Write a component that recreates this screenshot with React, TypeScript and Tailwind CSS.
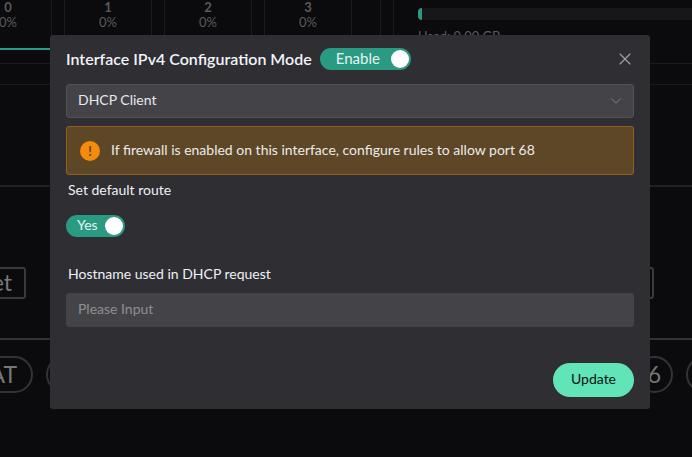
import { ChevronDown, X } from 'lucide-react';

const CoreTile = ({ id }: { id: number }) => (
  <div className="flex h-[50px] w-[88px] shrink-0 flex-col items-center border-x border-[#1c1c1e] pt-px text-[#5a5a5c]">
    <span className="text-[13px] font-bold leading-[12px]">{id}</span>
    <span className="mt-[2px] text-[13px] leading-[15px]">0%</span>
  </div>
);

const Toggle = ({ label, width, big }: { label: string; width: string; big?: boolean }) => (
  <div className={`flex items-center justify-between rounded-full bg-[#2b9a82] pr-[2px] ${width} ${big ? 'h-[22px] pl-[16px] text-[15px]' : 'h-[22px] pl-[11px] text-[14px]'} text-[#e2f6f1]`}>
    <span className="pb-[2px] leading-none">{label}</span>
    <span className="h-[18px] w-[18px] rounded-full bg-white" />
  </div>
);

export default function App() {
  return (
    <div className="relative h-[457px] w-[692px] overflow-hidden bg-[#0b0b0d] font-['Lato',sans-serif]">
      {/* page behind the dialog */}
      <div className="flex h-[64px] border-b border-[#1c1c1e]">
        <div className="flex w-[381px] shrink-0 gap-3 overflow-hidden border-r border-[#1c1c1e] pl-[65px]">
          <div className="relative -ml-[101px] flex self-start">
            <CoreTile id={0} />
            <div className="absolute bottom-0 left-0 h-[2px] w-full bg-[#2b9a82]" />
          </div>
          <CoreTile id={1} />
          <CoreTile id={2} />
          <CoreTile id={3} />
        </div>
        <div className="ml-3 flex-1 border-l border-[#1c1c1e] pl-[24px] pt-2">
          <div className="h-3 w-full rounded-l-full bg-[#171719]">
            <div className="h-3 w-1 rounded-l-full bg-[#2b9a82]" />
          </div>
          <div className="mt-2 text-[13px] leading-[16px] text-[#5a5a5c]">Used: 0.00 GB</div>
        </div>
      </div>
      <div className="mt-[20px] h-[101px] border-t border-[#1c1c1e]" />
      <div className="flex h-[153px] items-start justify-between border-t-2 border-[#222224] pt-[80px]">
        <div className="-ml-[30px] flex h-[32px] w-[56px] items-center justify-end rounded-[3px] border-2 border-[#3a3a3c] pb-[2px] pr-[12px] text-[23px] text-[#77777a]">et</div>
        <div className="mr-[38px] h-[32px] w-[20px] rounded-[3px] border-2 border-[#3a3a3c]" />
      </div>
      <div className="flex items-center justify-between border-t-2 border-[#333335] pt-[16px]">
        <div className="flex gap-[13px]">
          <div className="-ml-[30px] flex h-[37px] w-[63px] items-center justify-end rounded-full border-2 border-[#333335] pr-[14px] text-[23px] text-[#77777a]">AT</div>
          <div className="h-[37px] w-[37px] rounded-full border-2 border-[#333335]" />
        </div>
        <div className="flex gap-[13px]">
          <div className="flex h-[37px] w-[37px] items-center justify-center rounded-full border-2 border-[#333335] text-[23px] text-[#77777a]">6</div>
          <div className="-mr-[31px] h-[37px] w-[37px] rounded-full border-2 border-[#333335]" />
        </div>
      </div>

      {/* dialog */}
      <div className="absolute left-[50px] top-[35px] flex h-[374px] w-[600px] flex-col rounded-[3px] bg-[#2e2e33] px-4 pt-[13px]">
        <div className="flex h-[22px] items-center">
          <h2 className="text-[16px] font-semibold leading-none text-[#f0f4f9]">Interface IPv4 Configuration Mode</h2>
          <div className="ml-2">
            <Toggle label="Enable" width="w-[91px]" big />
          </div>
          <X className="-mr-px ml-auto text-[#a2a2a6]" size={20} strokeWidth={1.4} />
        </div>

        <div className="mt-[14px] flex h-[34px] items-center justify-between rounded-[3px] border border-[#505254] bg-[#444448] pb-[3px] pl-[11px] pr-[8px] text-[14px] text-[#e6e9ee]">
          <span>DHCP Client</span>
          <ChevronDown className="mt-[3px] text-[#808084]" size={18} strokeWidth={1.3} />
        </div>

        <div className="mt-2 flex h-[49px] items-center rounded-[3px] border border-[#97601a] bg-[#5e4726] pl-[13px] text-[14px] text-[#ebebeb]">
          <span className="flex h-5 w-5 items-center justify-center rounded-full bg-[#f58b0a] text-[14px] font-bold leading-none text-[#5e4726]">!</span>
          <span className="mb-[3px] ml-[11px]">If firewall is enabled on this interface, configure rules to allow port 68</span>
        </div>

        <label className="ml-[2px] mt-[6px] text-[14px] leading-[17px] text-[#eef1f6]">Set default route</label>
        <div className="mt-[17px] w-[59px]">
          <Toggle label="Yes" width="w-[59px]" />
        </div>

        <label className="ml-[2px] mt-[28px] text-[14px] leading-[17px] text-[#eef1f6]">Hostname used in DHCP request</label>
        <div className="mt-[11px] flex h-[34px] w-full items-center rounded-[3px] bg-[#444448] pb-[3px] pl-3 text-[14px] text-[#8e8e93]">Please Input</div>

        <button className="ml-auto mt-[36px] h-[34px] w-[81px] rounded-full bg-[#62e4b9] pb-[3px] text-[14px] text-[#08120f]">Update</button>
      </div>
    </div>
  );
}
